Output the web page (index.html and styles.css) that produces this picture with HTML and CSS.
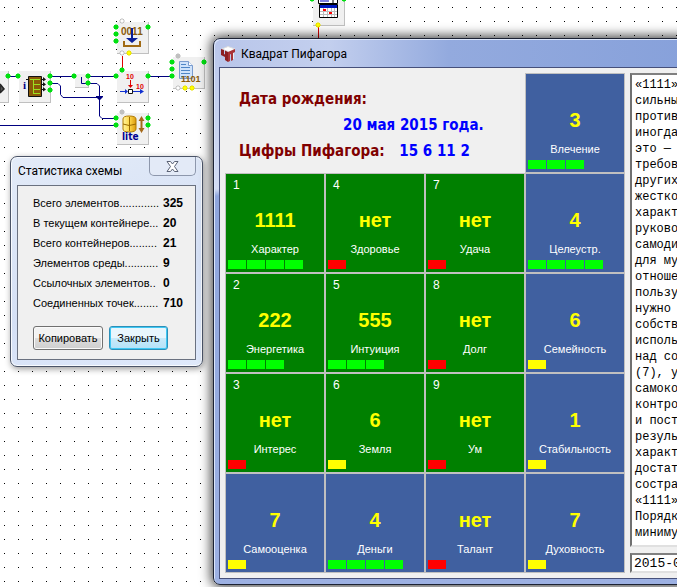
FILE: index.html
```html
<!DOCTYPE html>
<html lang="ru">
<head>
  <meta charset="UTF-8">
  <meta name="viewport" content="width=device-width, initial-scale=1.0">
  <title>Квадрат Пифагора</title>
  <link rel="stylesheet" href="styles.css">
</head>
<body>
  <svg class="scheme" width="420" height="160" viewBox="0 0 420 160" xmlns="http://www.w3.org/2000/svg">
    <defs>
      <g id="node">
        <rect width="32" height="32" fill="#c0c0c0"/>
        <rect width="31" height="31" fill="#f0f0f0"/>
      </g>
      <path id="port" d="M-1-2h2l1 1v2l-1 1h-2l-1-1v-2z" stroke-width="1"/>
      <linearGradient id="gold" x1="0" x2="1">
        <stop offset="0" stop-color="#fff3a0"/>
        <stop offset="0.5" stop-color="#ffd84a"/>
        <stop offset="1" stop-color="#d99a10"/>
      </linearGradient>
    </defs>

    <use href="#node" x="-23" y="71"/>
    <use href="#node" x="19" y="71"/>
    <use href="#node" x="117" y="22"/>
    <use href="#node" x="117" y="71"/>
    <use href="#node" x="117" y="113"/>
    <use href="#node" x="173" y="57"/>
    <use href="#node" x="313" y="-6"/>
    <path d="M75 74h14v14h-14z" fill="#c0c0c0"/>
    <path d="M75 74h13v13h-13z" fill="#f0f0f0"/>

    <!-- wires -->
    <g fill="none" stroke="#000080">
      <path d="M8 76.500H18M50 76.500H74M88 76.500H116M148 76.500H172M81.500 77V83.500H88"/>
      <path d="M50 83.500H58L60.500 86V94.500L63 97.500H99"/>
      <path d="M88 83.500H97L99.500 86V116L102 118.500H116M0 125.500H116"/>
    </g>
    <path d="M96 96h7v1l-3 3h-1l-3-3z" fill="#000080"/>
    <path d="M122.500 56V69M318.500 27V40" stroke="#e00000"/>

    <!-- left clipped node -->
    <path d="M0 84l4 5-4 4M0 86v6" fill="#555" stroke="#222" stroke-width="1.500"/>

    <!-- chip -->
    <text class="ico-i" x="23" y="89">i</text>
    <path d="M28.500 76.500h13v20h-13z" fill="#8a5a08" stroke="#111"/>
    <path d="M26 79.500h3M41 79.500h4M41 84.500h4M41 89.500h4" stroke="#111"/>
    <path d="M43 77l3 2.500-3 2zM43 82l3 2.500-3 2zM43 87l3 2.500-3 2z" fill="#111"/>
    <path d="M30 79.500h10M33.500 80v14M34 84.500h6M34 89.500h6M34 93.500h6" stroke="#9be020" fill="none"/>

    <!-- 0011 input -->
    <text class="ico-num" x="121" y="35">0011</text>
    <path d="M131 28h2v10h5l-6 5-6-5h5z" fill="#0a1f9a"/>
    <path d="M124 41v5h16v-5" fill="none" stroke="#a06a14" stroke-width="2"/>

    <!-- 10 / 10 switch -->
    <text class="ico-red" x="126" y="79">10</text>
    <text class="ico-red" x="136" y="89">10</text>
    <path d="M130.500 80v6" stroke="#e00000"/>
    <path d="M128 85h5l-2.500 3z" fill="#e00000"/>
    <path d="M120 91.500h7M133 91.500h7" stroke="#1030d0"/>
    <path d="M125 89l3 2.500-3 2.500zM140 89l4 2.500-4 2.500z" fill="#1030d0"/>
    <path d="M128.500 89.500h4v4h-4z" fill="#fff" stroke="#111"/>

    <!-- document -->
    <path d="M179.500 61.500h9l4 4v13h-13z" fill="#cfe3fb" stroke="#7a9cce"/>
    <path d="M188.500 61.500v4h4" fill="#fff" stroke="#7a9cce"/>
    <path d="M181 64.500h5M181 67.500h9M181 70.500h9M181 73.500h9M181 76.500h5" stroke="#4f86c6"/>
    <text class="ico-num ico-num-s" x="181" y="82">1101</text>

    <!-- lite database -->
    <path d="M123 119q0-3 6-3 7 0 7 3v10q0 3-7 3-6 0-6-3z" fill="url(#gold)" stroke="#b07a00"/>
    <path d="M129.500 117v14M123 124q6 3 13 0" fill="none" stroke="#9a6a00"/>
    <path d="M141.500 116l3 5h-2v7h2l-3 5-3-5h2v-7h-2z" fill="#a5691a"/>
    <text class="ico-lite" x="122" y="140">lite</text>

    <!-- calendar -->
    <path d="M318.500-1V3.500h19V-1M319.500 4.500h18v13h-18z" fill="#fff" stroke="#000"/>
    <path d="M320 1h9" stroke="#0000c0"/>
    <path d="M333 0v3" stroke="#000"/>
    <path d="M320 5h17v3h-17z" fill="#0018c0"/>
    <path d="M320 11.500h17M320 14.500h17M323.500 8v9M327.500 8v9M331.500 8v9M334.500 8v9" stroke="#bbb"/>
    <path d="M323 9h3v2h-3zM329 12h3v2h-3z" fill="#f00"/>

    <g fill="#00e010" stroke="#00e010">
      <use href="#port" x="8" y="76"/><use href="#port" x="18" y="76"/>
      <use href="#port" x="50" y="76"/><use href="#port" x="50" y="83"/><use href="#port" x="50" y="90"/>
      <use href="#port" x="74" y="76"/><use href="#port" x="88" y="76"/><use href="#port" x="88" y="83"/>
      <use href="#port" x="116" y="27"/><use href="#port" x="116" y="34"/><use href="#port" x="116" y="41"/>
      <use href="#port" x="148" y="27"/><use href="#port" x="122" y="70"/>
      <use href="#port" x="116" y="76"/><use href="#port" x="148" y="76"/>
      <use href="#port" x="116" y="118"/><use href="#port" x="116" y="125"/>
      <use href="#port" x="148" y="118"/><use href="#port" x="148" y="125"/>
      <use href="#port" x="172" y="62"/><use href="#port" x="172" y="69"/><use href="#port" x="172" y="76"/>
      <use href="#port" x="204" y="62"/><use href="#port" x="312" y="-1"/><use href="#port" x="344" y="-1"/>
    </g>
    <g fill="#fff" stroke="#c0c0c0">
      <use href="#port" x="122" y="21"/><use href="#port" x="122" y="53"/><use href="#port" x="178" y="88"/>
    </g>
    <g fill="#c0c0c0" stroke="#c0c0c0">
      <use href="#port" x="122" y="112"/><use href="#port" x="178" y="56"/>
    </g>
    <g fill="#ff0" stroke="#e8e000">
      <use href="#port" x="129" y="53"/><use href="#port" x="185" y="88"/>
      <use href="#port" x="192" y="88"/><use href="#port" x="318" y="25"/>
    </g>
  </svg>

  <section class="window stats">
    <header class="stats-title">
      <h2>Статистика схемы</h2>
      <button type="button" class="close-btn" aria-label="Закрыть окно">
        <svg width="13" height="11" viewBox="0 0 13 11">
          <path d="M1 .5h3.500l2 2.500 2-2.500H12L8.500 5.500 12 10.500H8.500l-2-2.500-2 2.500H1l3.500-5z" fill="#fff" stroke="#5a6275"/>
        </svg>
      </button>
    </header>
    <div class="stats-body">
      <dl class="stats-list">
        <dt>Всего элементов.............</dt><dd>325</dd>
        <dt>В текущем контейнере...</dt><dd>20</dd>
        <dt>Всего контейнеров.........</dt><dd>21</dd>
        <dt>Элементов среды...........</dt><dd>9</dd>
        <dt>Ссылочных элементов..</dt><dd>0</dd>
        <dt>Соединенных точек........</dt><dd>710</dd>
      </dl>
      <div class="stats-actions">
        <button type="button" class="btn">Копировать</button>
        <button type="button" class="btn btn-default">Закрыть</button>
      </div>
    </div>
  </section>

  <main class="window square">
    <header class="square-title">
      <svg width="15" height="16" viewBox="0 0 15 16">
        <path d="M1 3l6-2.500L14 3l-6 3z" fill="#fff" stroke="#ddd"/>
        <path d="M0 3l3 1v4l1 .5V4.500L7 6v10l-3-2v-3L0 9z" fill="#8c1f22"/>
        <path d="M7 6l7-3v3l-2 1v7l-2 1V8l-1 .5V15l-2 1z" fill="#a83236"/>
        <path d="M12.500 7v6" stroke="#eee"/>
      </svg>
      <h1>Квадрат Пифагора</h1>
    </header>
    <div class="square-body">
      <div class="board">
        <div class="birth">
          <p class="caption">Дата рождения:</p>
          <p class="date">20 мая 2015 года.</p>
          <p class="caption">Цифры Пифагора: <span class="digits">15 6 11 2</span></p>
        </div>
        <div class="cell total"><b>3</b><span>Влечение</span><div class="bar good"><i></i><i></i><i></i></div></div>

        <div class="cell"><small>1</small><b>1111</b><span>Характер</span><div class="bar good"><i></i><i></i><i></i><i></i></div></div>
        <div class="cell"><small>4</small><b>нет</b><span>Здоровье</span><div class="bar none"><i></i></div></div>
        <div class="cell"><small>7</small><b>нет</b><span>Удача</span><div class="bar none"><i></i></div></div>
        <div class="cell total"><b>4</b><span>Целеустр.</span><div class="bar good"><i></i><i></i><i></i><i></i></div></div>

        <div class="cell"><small>2</small><b>222</b><span>Энергетика</span><div class="bar good"><i></i><i></i><i></i></div></div>
        <div class="cell"><small>5</small><b>555</b><span>Интуиция</span><div class="bar good"><i></i><i></i><i></i></div></div>
        <div class="cell"><small>8</small><b>нет</b><span>Долг</span><div class="bar none"><i></i></div></div>
        <div class="cell total"><b>6</b><span>Семейность</span><div class="bar weak"><i></i></div></div>

        <div class="cell"><small>3</small><b>нет</b><span>Интерес</span><div class="bar none"><i></i></div></div>
        <div class="cell"><small>6</small><b>6</b><span>Земля</span><div class="bar weak"><i></i></div></div>
        <div class="cell"><small>9</small><b>нет</b><span>Ум</span><div class="bar none"><i></i></div></div>
        <div class="cell total"><b>1</b><span>Стабильность</span><div class="bar weak"><i></i></div></div>

        <div class="cell total"><b>7</b><span>Самооценка</span><div class="bar weak"><i></i></div></div>
        <div class="cell total"><b>4</b><span>Деньги</span><div class="bar good"><i></i><i></i><i></i><i></i></div></div>
        <div class="cell total"><b>нет</b><span>Талант</span><div class="bar none"><i></i></div></div>
        <div class="cell total"><b>7</b><span>Духовность</span><div class="bar weak"><i></i></div></div>
      </div>
      <div class="side">
        <textarea class="memo" wrap="off" readonly aria-label="Описание">«1111»
сильны
против
иногда
это —
требов
других
жестко
характ
руково
самоди
для му
отноше
пользу
нужно
собств
исполь
над со
(7), у
самоко
контро
и пост
резуль
характ
достат
состра
«1111»
Порядк
миниму</textarea>
        <input class="date-input" type="text" value="2015-0" aria-label="Дата">
      </div>
    </div>
  </main>
</body>
</html>
```

FILE: styles.css
```css
* {
  box-sizing: border-box;
  margin: 0;
  padding: 0;
}

/* dotted grid of the editor */
body {
  position: relative;
  min-height: 100vh;
  overflow: hidden;
  font-family: "Liberation Sans", Arial, sans-serif;
  font-size: 12px;
  color: #000;
  background-color: #fff;
  background-image: conic-gradient(from 0deg at 1px 1px, #fff 270deg, #000 270deg);
  background-size: 14px 14px;
  background-position: 4px 7px;
}

.scheme {
  position: absolute;
  left: 0;
  top: 0;
}

.ico-num {
  font: bold 10px "Liberation Sans", sans-serif;
  fill: #8a5a08;
}

.ico-num-s {
  font-size: 9px;
}

.ico-red {
  font: bold 7px "Liberation Sans", sans-serif;
  fill: #e00000;
}

.ico-i {
  font: bold 11px "Liberation Serif", serif;
  fill: #000080;
}

.ico-lite {
  font: bold 10px "DejaVu Sans Condensed", "DejaVu Sans", sans-serif;
  fill: #000090;
}

.window {
  position: absolute;
  border: 1px solid #4b5468;
  border-radius: 7px;
}

.window h1,
.window h2 {
  font-family: Roboto, "Noto Sans", sans-serif;
  font-size: 12px;
  font-weight: 400;
}

/* statistics dialog */
.stats {
  left: 10px;
  top: 156px;
  width: 193px;
  padding: 0 6px 6px;
  background: linear-gradient(160deg, #e3ebf8, #d5e0f5 60%, #dfe9fb);
  box-shadow: inset 0 0 0 1px #f8fbff, 1px 2px 6px rgba(0, 0, 0, 0.4);
}

.stats-title {
  display: flex;
  align-items: flex-start;
  justify-content: space-between;
  height: 28px;
}

.stats-title h2 {
  padding: 7px 0 0 1px;
}

.close-btn {
  display: flex;
  align-items: center;
  justify-content: center;
  width: 47px;
  height: 19px;
  border: 1px solid #8d97ac;
  border-top: 0;
  border-radius: 0 0 5px 5px;
  background: #e3eaf7;
}

.stats-body {
  padding: 7px 8px 9px 15px;
  border: 1px solid #6a7180;
  background: #f0f0f0;
}

.stats-list {
  display: grid;
  grid-template-columns: 130px 1fr;
  line-height: 20px;
  white-space: nowrap;
}

.stats-list dt {
  font-size: 11px;
}

.stats-list dd {
  font-weight: bold;
}

.stats-actions {
  display: flex;
  gap: 6px;
  margin-top: 13px;
}

.btn {
  width: 70px;
  height: 24px;
  border: 1px solid #707070;
  border-radius: 3px;
  background: linear-gradient(#f2f2f2 50%, #dddddd 50%, #cfcfcf);
  box-shadow: inset 0 0 0 1px #fafafa;
  font: 11px "Liberation Sans", Arial, sans-serif;
}

.btn-default {
  width: 59px;
  border-color: #2c8fb8;
  background: linear-gradient(#e8f6fd 50%, #c8eafa 50%, #b5e2f8);
  box-shadow: inset 0 0 0 1px #3fc8f4;
}

/* main window runs past the right side of the screen */
.square {
  left: 213px;
  right: -40px;
  top: 38px;
  padding: 0 6px 5px 5px;
  border-color: #1c2233;
  background: linear-gradient(#b9c6ea, #d3dcf3 150px, #8fa6dd 157px, #9db1e3);
  box-shadow: inset 1px 1px 0 #dce6fa, 0 0 12px 2px rgba(0, 0, 0, 0.75);
}

.square-title {
  display: flex;
  align-items: center;
  gap: 5px;
  height: 27px;
  margin-top: 1px;
  padding-left: 2px;
  background: linear-gradient(90deg, #b9c6ea, #c3cfee 110px, #93aade 230px, #86a0da);
}

.square-body {
  display: flex;
  gap: 5px;
  padding: 5px;
  border: 1px solid #46507a;
  background: #f0f0f0;
}

.board {
  display: grid;
  grid-template-columns: repeat(4, 100px);
  grid-auto-rows: 100px;
}

.birth {
  grid-column: span 3;
  display: flex;
  flex-direction: column;
  gap: 2px;
  padding: 14px 0 0 14px;
  font: bold 15px/24px "DejaVu Sans Condensed", "DejaVu Sans", sans-serif;
  color: #800000;
}

.date,
.digits {
  color: #0000ff;
}

.date {
  padding-left: 104px;
}

.digits {
  margin-left: 10px;
}

.cell {
  display: flex;
  flex-direction: column;
  align-items: center;
  justify-content: flex-end;
  padding: 3px 2px;
  border: 1px solid #c0c0c0;
  background: #008000;
  color: #fff;
}

.total {
  background: #4060a0;
}

.cell small {
  align-self: flex-start;
  margin-bottom: auto;
  padding-left: 5px;
  font-size: 12px;
  line-height: 16px;
}

.cell b {
  font-size: 20px;
  line-height: 24px;
  color: #ffff00;
}

.cell span {
  margin: 9px 0 3px;
  font-size: 11px;
  line-height: 16px;
}

.bar {
  display: flex;
  align-self: flex-start;
  gap: 1px;
  height: 9px;
}

.bar i {
  width: 18px;
}

.good i {
  background: #00ff00;
}

.weak i {
  background: #ffff00;
}

.none i {
  background: #ff0000;
}

.side {
  display: flex;
  flex: 1;
  flex-direction: column;
  gap: 6px;
  min-width: 0;
}

.memo,
.date-input {
  width: 100%;
  border: 2px solid;
  border-color: #808080 #e0e0e0 #e0e0e0 #707070;
  background: #fff;
  color: #000;
  outline: 0;
}

.memo {
  flex: 1;
  padding: 2px 3px;
  font: 12px/16px "Liberation Mono", "Courier New", monospace;
  overflow: hidden;
  resize: none;
}

.date-input {
  height: 20px;
  padding: 0 2px;
  font: 13px "Liberation Mono", "Courier New", monospace;
}
```
